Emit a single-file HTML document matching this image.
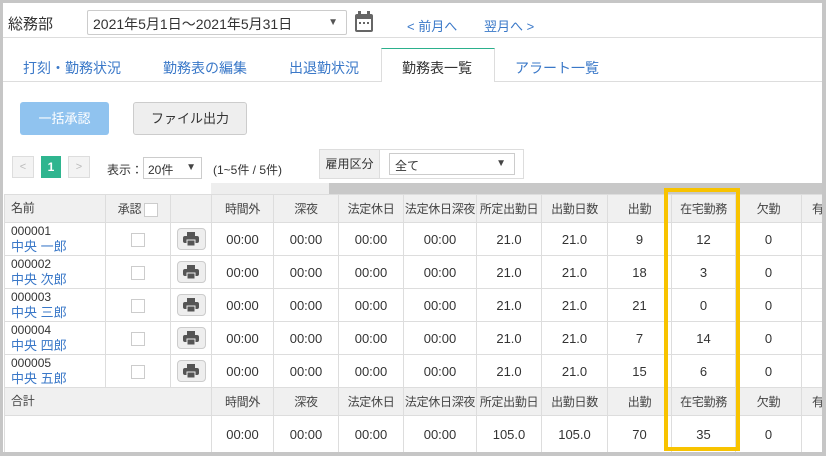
<!DOCTYPE html>
<html><head><meta charset="utf-8"><style>
*{box-sizing:border-box;margin:0;padding:0}
body{width:826px;height:456px;background:#c6c6c6;font-family:"Liberation Sans","Noto Sans CJK JP",sans-serif;color:#333;position:relative;overflow:hidden}
.panel{position:absolute;left:3px;top:3px;width:819px;height:449px;background:#fff;overflow:hidden}
.a{position:absolute}
.tab{position:absolute;top:55px;font-size:14px;color:#3a78c8;white-space:nowrap}
table{position:absolute;left:1px;top:191px;width:837px;border-collapse:collapse;table-layout:fixed;font-size:13px}
td{border:1px solid #ddd;text-align:center;vertical-align:middle;height:33px;color:#333;white-space:nowrap;overflow:hidden}
tr.h td{background:#f0f0f0;height:28px;font-size:12px;color:#444;letter-spacing:-0.3px}
tr.t td{height:37px}
.nm{text-align:left;padding-left:6px;font-size:12px;line-height:15px}
.nm span{color:#3a78c8;font-size:13px}
.cb{display:inline-block;width:14px;height:14px;border:1px solid #ccc;background:#fff;vertical-align:middle}
.pr{display:inline-block;width:29px;height:22px;border:1px solid #ccc;border-radius:4px;background:#eee;vertical-align:middle;padding-top:3px}
</style></head><body>
<div class="panel">
<div class="a" style="left:5px;top:10px;font-size:15px;color:#333">総務部</div>
<div class="a" style="left:84px;top:7px;width:260px;height:25px;border:1px solid #ccc;border-radius:2px;font-size:14px;padding:3px 0 0 5px">2021年5月1日～2021年5月31日<span style="position:absolute;right:8px;top:6px;font-size:10px;color:#555">▼</span></div>
<svg class="a" style="left:352px;top:8px" width="18" height="22" viewBox="0 0 18 22"><rect x="0" y="3" width="18" height="18" rx="2" fill="#666"/><rect x="2" y="8" width="14" height="11" fill="#fff"/><rect x="3" y="0" width="3" height="5" fill="#666"/><rect x="12" y="0" width="3" height="5" fill="#666"/><rect x="4" y="11" width="2" height="2" fill="#666"/><rect x="8" y="11" width="2" height="2" fill="#666"/><rect x="12" y="11" width="2" height="2" fill="#666"/></svg>
<div class="a" style="left:404px;top:13px;font-size:13px;color:#3a78c8">&lt; 前月へ</div>
<div class="a" style="left:481px;top:13px;font-size:13px;color:#3a78c8">翌月へ &gt;</div>
<div class="a" style="left:0;top:34px;width:819px;height:1px;background:#ddd"></div>
<div class="a" style="left:0;top:78px;width:819px;height:1px;background:#ddd"></div>
<div class="a" style="left:378px;top:45px;width:114px;height:34px;background:#fff;border:1px solid #ddd;border-top:1px solid #2bb08c;border-bottom:none"></div>
<div class="tab" style="left:20px">打刻・勤務状況</div>
<div class="tab" style="left:160px">勤務表の編集</div>
<div class="tab" style="left:286px">出退勤状況</div>
<div class="tab" style="left:399px;color:#333">勤務表一覧</div>
<div class="tab" style="left:512px">アラート一覧</div>
<div class="a" style="left:17px;top:99px;width:89px;height:33px;background:#90c3ef;border-radius:3px;color:#fff;font-size:13px;text-align:center;line-height:33px">一括承認</div>
<div class="a" style="left:130px;top:99px;width:114px;height:33px;background:#eee;border:1px solid #ccc;border-radius:3px;font-size:13px;text-align:center;line-height:31px">ファイル出力</div>
<div class="a" style="left:9px;top:153px;width:22px;height:22px;border:1px solid #ddd;background:#f3f3f3;color:#bbb;font-size:11px;text-align:center;line-height:20px">&lt;</div>
<div class="a" style="left:38px;top:153px;width:20px;height:22px;background:#2fb58f;color:#fff;font-size:12px;font-weight:bold;text-align:center;line-height:22px">1</div>
<div class="a" style="left:65px;top:153px;width:22px;height:22px;border:1px solid #ddd;background:#f3f3f3;color:#bbb;font-size:11px;text-align:center;line-height:20px">&gt;</div>
<div class="a" style="left:104px;top:158px;font-size:12px">表示：</div>
<div class="a" style="left:140px;top:154px;width:59px;height:22px;border:1px solid #ccc;font-size:12px;padding:3px 0 0 4px">20件<span style="position:absolute;right:5px;top:4px;font-size:10px;color:#444">▼</span></div>
<div class="a" style="left:210px;top:158px;font-size:12px">(1~5件 / 5件)</div>
<div class="a" style="left:316px;top:146px;width:205px;height:30px;border:1px solid #ddd;background:#fff"></div>
<div class="a" style="left:317px;top:147px;width:60px;height:28px;background:#f0f0f0;border-right:1px solid #ddd;font-size:12px;text-align:center;line-height:28px">雇用区分</div>
<div class="a" style="left:386px;top:150px;width:126px;height:22px;border:1px solid #ccc;font-size:12px;padding:3px 0 0 5px">全て<span style="position:absolute;right:8px;top:4px;font-size:10px;color:#444">▼</span></div>
<div class="a" style="left:208px;top:180px;width:118px;height:11px;background:#eee"></div>
<div class="a" style="left:326px;top:180px;width:493px;height:11px;background:#c8c8c8"></div>
<table>
<colgroup><col style="width:101px"><col style="width:65px"><col style="width:41px"><col style="width:62px"><col style="width:65px"><col style="width:65px"><col style="width:73px"><col style="width:65px"><col style="width:66px"><col style="width:64px"><col style="width:64px"><col style="width:66px"><col style="width:40px"></colgroup>
<tr class="h"><td class="nm">名前</td><td>承認 <span class="cb"></span></td><td></td><td>時間外</td><td>深夜</td><td>法定休日</td><td>法定休日深夜</td><td>所定出勤日</td><td>出勤日数</td><td>出勤</td><td>在宅勤務</td><td>欠勤</td><td style="text-align:left;padding-left:10px">有</td></tr>
<tr><td class="nm">000001<br><span>中央 一郎</span></td><td><span class="cb"></span></td><td><span class="pr"><svg width="16" height="14" viewBox="0 0 16 14"><rect x="4" y="0" width="8" height="4" fill="#555"/><rect x="0" y="4" width="16" height="7" rx="2" fill="#555"/><rect x="4" y="8" width="8" height="6" fill="#555" stroke="#eee" stroke-width="1"/></svg></span></td><td>00:00</td><td>00:00</td><td>00:00</td><td>00:00</td><td>21.0</td><td>21.0</td><td>9</td><td>12</td><td>0</td><td></td></tr>
<tr><td class="nm">000002<br><span>中央 次郎</span></td><td><span class="cb"></span></td><td><span class="pr"><svg width="16" height="14" viewBox="0 0 16 14"><rect x="4" y="0" width="8" height="4" fill="#555"/><rect x="0" y="4" width="16" height="7" rx="2" fill="#555"/><rect x="4" y="8" width="8" height="6" fill="#555" stroke="#eee" stroke-width="1"/></svg></span></td><td>00:00</td><td>00:00</td><td>00:00</td><td>00:00</td><td>21.0</td><td>21.0</td><td>18</td><td>3</td><td>0</td><td></td></tr>
<tr><td class="nm">000003<br><span>中央 三郎</span></td><td><span class="cb"></span></td><td><span class="pr"><svg width="16" height="14" viewBox="0 0 16 14"><rect x="4" y="0" width="8" height="4" fill="#555"/><rect x="0" y="4" width="16" height="7" rx="2" fill="#555"/><rect x="4" y="8" width="8" height="6" fill="#555" stroke="#eee" stroke-width="1"/></svg></span></td><td>00:00</td><td>00:00</td><td>00:00</td><td>00:00</td><td>21.0</td><td>21.0</td><td>21</td><td>0</td><td>0</td><td></td></tr>
<tr><td class="nm">000004<br><span>中央 四郎</span></td><td><span class="cb"></span></td><td><span class="pr"><svg width="16" height="14" viewBox="0 0 16 14"><rect x="4" y="0" width="8" height="4" fill="#555"/><rect x="0" y="4" width="16" height="7" rx="2" fill="#555"/><rect x="4" y="8" width="8" height="6" fill="#555" stroke="#eee" stroke-width="1"/></svg></span></td><td>00:00</td><td>00:00</td><td>00:00</td><td>00:00</td><td>21.0</td><td>21.0</td><td>7</td><td>14</td><td>0</td><td></td></tr>
<tr><td class="nm">000005<br><span>中央 五郎</span></td><td><span class="cb"></span></td><td><span class="pr"><svg width="16" height="14" viewBox="0 0 16 14"><rect x="4" y="0" width="8" height="4" fill="#555"/><rect x="0" y="4" width="16" height="7" rx="2" fill="#555"/><rect x="4" y="8" width="8" height="6" fill="#555" stroke="#eee" stroke-width="1"/></svg></span></td><td>00:00</td><td>00:00</td><td>00:00</td><td>00:00</td><td>21.0</td><td>21.0</td><td>15</td><td>6</td><td>0</td><td></td></tr>
<tr class="h"><td class="nm" colspan="3" style="border-right:none">合計</td><td>時間外</td><td>深夜</td><td>法定休日</td><td>法定休日深夜</td><td>所定出勤日</td><td>出勤日数</td><td>出勤</td><td>在宅勤務</td><td>欠勤</td><td style="text-align:left;padding-left:10px">有</td></tr>
<tr class="t"><td colspan="3"></td><td>00:00</td><td>00:00</td><td>00:00</td><td>00:00</td><td>105.0</td><td>105.0</td><td>70</td><td>35</td><td>0</td><td></td></tr>
</table>
<div class="a" style="left:661px;top:185px;width:76px;height:263px;border:4px solid #f8c300"></div>
</div>
</body></html>
